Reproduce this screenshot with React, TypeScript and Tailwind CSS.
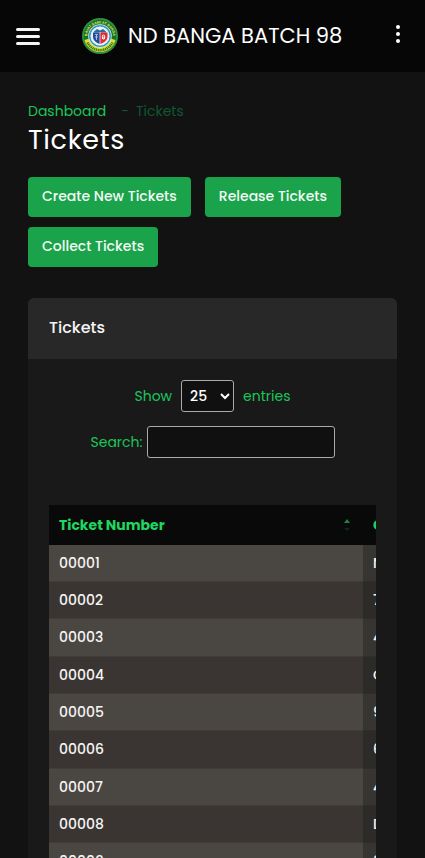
const actions = ['Create New Tickets', 'Release Tickets', 'Collect Tickets'];

const tickets = [
  { number: '00001', code: 'N4K82X' },
  { number: '00002', code: '7QD15M' },
  { number: '00003', code: '4HB60T' },
  { number: '00004', code: 'C9W37R' },
  { number: '00005', code: '9LF24P' },
  { number: '00006', code: '6VN81S' },
  { number: '00007', code: '4TX59J' },
  { number: '00008', code: 'D2G76Y' },
  { number: '00009', code: '8RM43A' },
  { number: '00010', code: 'K5P90E' },
];

function Seal() {
  return (
    <svg viewBox="0 0 72 72" className="size-9 shrink-0" aria-hidden="true">
      <defs>
        <path id="seal-top" d="M10.5 42A26 26 0 1 1 61.5 42" />
      </defs>
      <circle cx="36" cy="36" r="36" fill="#2f9443" />
      <circle cx="36" cy="36" r="32.5" fill="#14722f" />
      <path d="M5 44A32 32 0 0 0 67 44L57 41A22 22 0 0 1 15 41Z" fill="#e4dc27" />
      <path d="M11 49A28 28 0 0 0 61 49" fill="none" stroke="#26772b" strokeWidth="5" strokeDasharray="2.4 1.3" />
      <text fontSize="7" fontWeight="700" fill="#f2e94a" fontFamily="Liberation Sans, sans-serif">
        <textPath href="#seal-top" startOffset="50%" textAnchor="middle">BAYAT SAMI AT BANGA</textPath>
      </text>
      <circle cx="36" cy="36" r="23.5" fill="#dceaf0" />
      <circle cx="36" cy="36" r="20.5" fill="none" stroke="#2f9ac4" strokeWidth="3" />
      <circle cx="36" cy="36" r="18.5" fill="#e8f1f4" />
      <path d="M24 27L30 22L36 25L42 22L48 27V29H24Z" fill="#2b6c9f" />
      <path d="M22 29H36V52C27 49 22 44 22 37Z" fill="#244c98" />
      <path d="M36 29H51V37C51 44 45 49 36 52Z" fill="#e22a35" />
      <path d="M26 33H32M26 38H32M29 33V44" stroke="#bed3ed" strokeWidth="1.6" />
      <ellipse cx="43" cy="38" rx="3.5" ry="5" fill="#fff" />
      <path d="M41 37H45M43 34V41" stroke="#d6434b" strokeWidth="1.2" />
      <path d="M36 28V52" stroke="#fff" strokeWidth="1.4" />
    </svg>
  );
}

function Header() {
  return (
    <header className="flex h-18 shrink-0 items-center bg-[#060606] px-4">
      <button type="button" aria-label="Open menu" className="mr-[42px] flex w-6 shrink-0 flex-col gap-1">
        <span className="h-[3px] w-6 rounded-full bg-[#f4f4f4]" />
        <span className="h-[3px] w-6 rounded-full bg-[#f4f4f4]" />
        <span className="h-[3px] w-6 rounded-full bg-[#f4f4f4]" />
      </button>
      <Seal />
      <span className="ml-2.5 flex-1 text-[21px] whitespace-nowrap text-white">ND BANGA BATCH 98</span>
      <button type="button" aria-label="More options" className="mb-1 flex w-[22px] flex-col items-center gap-[3px]">
        <span className="size-1 rounded-full bg-white" />
        <span className="size-1 rounded-full bg-white" />
        <span className="size-1 rounded-full bg-white" />
      </button>
    </header>
  );
}

function SortIcon() {
  return (
    <svg viewBox="0 0 6 14" className="h-3.5 w-1.5" aria-hidden="true">
      <path d="M0 5L3 1L6 5Z" fill="#1b8443" />
      <path d="M0 10L3 13L6 10Z" fill="#0d2a18" />
    </svg>
  );
}

function TicketTable() {
  return (
    <div className="mt-[47px] overflow-hidden">
      <table className="h-[413px] w-[520px] table-fixed text-left text-sm">
        <thead>
          <tr className="h-10 bg-[#090909] text-[#1ed760]">
            <th className="w-[314px] px-2.5 font-bold">
              <span className="flex items-center justify-between pr-[3px]">
                Ticket Number
                <SortIcon />
              </span>
            </th>
            <th className="px-2.5 font-bold">Code</th>
          </tr>
        </thead>
        <tbody>
          {tickets.map((ticket) => (
            <tr key={ticket.number} className="group font-medium text-[#f5f5f4]">
              <td className="border-b border-[#403d39] bg-[#3a3532] px-2.5 group-odd:bg-[#4a4641]">{ticket.number}</td>
              <td className="border-b border-[#302e2b] bg-[#2d2b28] px-2.5 group-odd:bg-[#373531]">{ticket.code}</td>
            </tr>
          ))}
        </tbody>
      </table>
    </div>
  );
}

export default function App() {
  return (
    <div className="flex h-screen flex-col overflow-hidden bg-[#121212] font-['Poppins','Inter',sans-serif] text-sm">
      <Header />
      <main className="flex-1 overflow-y-auto px-7 pt-[29px] [scrollbar-width:none]">
        <nav aria-label="Breadcrumb" className="flex h-5 items-center">
          <a href="#dashboard" className="text-[#1bc65a]">Dashboard</a>
          <span className="ml-[15px] text-[#0f5730]">-</span>
          <span className="ml-[7px] text-[#0f5730]">Tickets</span>
        </nav>
        <h1 className="text-[27px] leading-[38px] tracking-wide text-white">Tickets</h1>

        <div className="mt-[18px] flex flex-wrap gap-x-3.5 gap-y-2.5">
          {actions.map((action) => (
            <button key={action} type="button" className="h-10 rounded bg-[#1aa34a] px-3.5 pb-0.5 font-medium text-[#f3faf5]">
              {action}
            </button>
          ))}
        </div>

        <section className="mt-[31px] rounded-t-md bg-[#191919]">
          <h2 className="flex h-[61px] items-center rounded-t-md bg-[#282828] px-[21px] pb-0.5 text-base font-medium text-[#f4f4f4]">
            Tickets
          </h2>
          <div className="px-[21px] pt-[21px]">
            <label className="flex items-center justify-center gap-[9px] text-[#1bc65a]">
              Show
              <select defaultValue="25" className="h-8 w-[53px] rounded-[3px] border border-[#aaa] bg-[#101010] pl-1 font-medium text-white">
                <option>10</option>
                <option>25</option>
                <option>50</option>
                <option>100</option>
              </select>
              entries
            </label>
            <label className="mt-3.5 flex items-center justify-center gap-1 text-[#1bc65a]">
              Search:
              <input type="search" className="h-8 w-[188px] rounded-[3px] border border-[#aaa] bg-[#101010] px-1 text-white" />
            </label>
            <TicketTable />
          </div>
        </section>
      </main>
    </div>
  );
}
